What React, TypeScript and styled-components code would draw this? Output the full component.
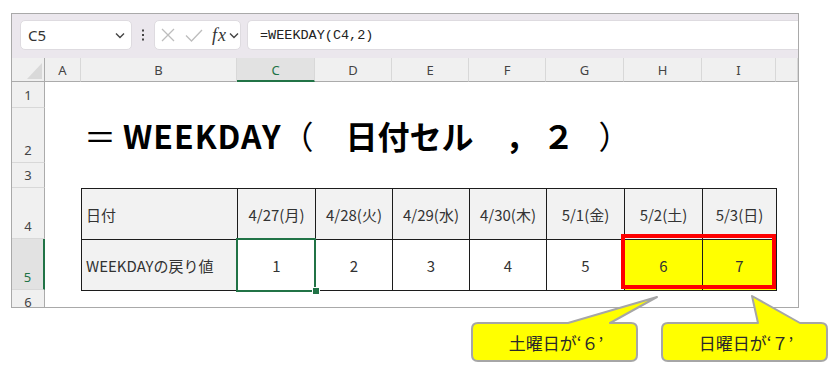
import React from "react";
import styled, { createGlobalStyle } from "styled-components";

// sheet geometry, taken from the Excel window
const COL_WIDTHS = [33, 36, 156, 78, 77, 77, 77, 78, 78, 74, 22];
const ROW_HEIGHTS = [24, 26, 55, 25, 51, 51, 25];
const COL_LETTERS = ["A", "B", "C", "D", "E", "F", "G", "H", "I", ""];
const ACTIVE_COL = "C";
const ACTIVE_ROW = 5;

const DAYS = [
  { label: "4/27(月)", value: 1 },
  { label: "4/28(火)", value: 2 },
  { label: "4/29(水)", value: 3 },
  { label: "4/30(木)", value: 4 },
  { label: "5/1(金)", value: 5 },
  { label: "5/2(土)", value: 6, mark: true },
  { label: "5/3(日)", value: 7, mark: true },
];

const GlobalStyle = createGlobalStyle`
  html, body {
    margin: 0;
    padding: 0;
    background: #fff;
  }
  body {
    font-family: "Noto Sans", "Noto Sans CJK JP", sans-serif;
  }
`;

const Page = styled.div`
  position: relative;
  width: 836px;
  height: 369px;
  padding: 13px 0 0 11px;
  box-sizing: border-box;
  overflow: hidden;
`;

const Frame = styled.div`
  width: 788px;
  box-sizing: border-box;
  border: 1px solid #a9a9a9;
  background: #fff;
`;

/* ---------- formula bar ---------- */

const FormulaBar = styled.div`
  height: 44px;
  box-sizing: border-box;
  display: flex;
  align-items: flex-start;
  padding: 6px 0 0 8px;
  background: #ebe7ed;
`;

const WhiteBox = styled.div`
  height: 30px;
  box-sizing: border-box;
  display: flex;
  align-items: center;
  background: #fff;
  border: 1px solid #dedbe0;
  border-radius: 5px;
`;

const NameBox = styled(WhiteBox)`
  width: 112px;
  justify-content: space-between;
  padding: 0 6px 0 7px;
  font-size: 15px;
  color: #333;
`;

const Dots = styled.div`
  width: 22px;
  height: 30px;
  display: flex;
  align-items: center;
  justify-content: center;
`;

const FxBox = styled(WhiteBox)`
  width: 87px;
  padding: 0 0 0 6px;
  gap: 10px;
`;

const FxText = styled.span`
  font-family: "Liberation Serif", "DejaVu Serif", serif;
  font-style: italic;
  font-size: 18px;
  color: #333;
  letter-spacing: 1px;
  margin-left: -1px;
  margin-right: -8px;
`;

const FormulaInput = styled(WhiteBox)`
  flex: 1;
  margin-left: 6px;
  border-right: none;
  border-radius: 5px 0 0 5px;
  padding-left: 12px;
  font-family: "Liberation Mono", "DejaVu Sans Mono", monospace;
  font-size: 13.5px;
  color: #222;
`;

/* ---------- sheet grid ---------- */

const Sheet = styled.div`
  display: grid;
  grid-template-columns: ${COL_WIDTHS.map((w) => `${w}px`).join(" ")};
  grid-template-rows: ${ROW_HEIGHTS.map((h) => `${h}px`).join(" ")};
  height: 249px;
  overflow: hidden;
  font-size: 13px;
`;

const Corner = styled.div`
  grid-row: 1;
  grid-column: 1;
  position: relative;
  background: #f0f0f0;
  border-right: 1px solid #ababab;
  border-bottom: 1px solid #ababab;
  box-sizing: border-box;

  &::after {
    content: "";
    position: absolute;
    right: 2px;
    bottom: 2px;
    border-style: solid;
    border-width: 0 0 16px 15px;
    border-color: transparent transparent #d9d9d9 transparent;
  }
`;

const ColHead = styled.div<{ $active?: boolean }>`
  grid-row: 1;
  display: flex;
  align-items: center;
  justify-content: center;
  box-sizing: border-box;
  padding-top: 1px;
  background: ${(p) => (p.$active ? "#e2e2e2" : "#f0f0f0")};
  border-right: 1px solid #d8d8d8;
  border-bottom: ${(p) => (p.$active ? "2px solid #217346" : "1px solid #ababab")};
  color: ${(p) => (p.$active ? "#217346" : "#444")};
`;

const RowHead = styled.div<{ $row: number; $active?: boolean }>`
  grid-column: 1;
  grid-row: ${(p) => p.$row};
  display: flex;
  align-items: flex-end;
  justify-content: center;
  box-sizing: border-box;
  padding-bottom: 3px;
  background: ${(p) => (p.$active ? "#e2e2e2" : "#f0f0f0")};
  border-right: ${(p) => (p.$active ? "2px solid #217346" : "1px solid #ababab")};
  border-bottom: 1px solid #d8d8d8;
  color: ${(p) => (p.$active ? "#217346" : "#444")};
`;

const Title = styled.div`
  grid-column: 3 / 12;
  grid-row: 3;
  display: flex;
  align-items: flex-end;
  padding: 0 0 9px 3px;
  white-space: pre;
  font-family: "Noto Sans CJK JP", sans-serif;
  font-weight: 700;
  font-size: 32px;
  line-height: 1.2;
  color: #000;
`;

// the full-width brackets and equals sign are drawn thin in the original
const TitlePart = styled.span<{ $thin?: boolean; $w?: number; $spread?: number }>`
  font-weight: ${(p) => (p.$thin ? 400 : 700)};
  letter-spacing: ${(p) => p.$spread ?? 0}px;
  ${(p) => (p.$w ? `display: inline-block; width: ${p.$w}px;` : "")}
`;

const TitleGap = styled.span<{ $w: number }>`
  display: inline-block;
  width: ${(p) => p.$w}px;
`;

const TableArea = styled.div`
  grid-column: 3 / 11;
  grid-row: 5 / 7;
  position: relative;
`;

const DataTable = styled.table`
  border-collapse: collapse;
  table-layout: fixed;
  width: 695px;
  font-family: "Noto Sans CJK JP", sans-serif;
  font-size: 15px;
  color: #333;

  tr {
    height: 51px;
  }
`;

const Cell = styled.td<{ $tone?: "head" | "plain" | "mark"; $left?: boolean }>`
  padding: 0 4px;
  border: 1px solid #1c1c1c;
  text-align: ${(p) => (p.$left ? "left" : "center")};
  background: ${(p) =>
    p.$tone === "head" ? "#f2f2f2" : p.$tone === "mark" ? "#ffff00" : "#fff"};
  white-space: nowrap;
`;

const SelectedCell = styled(Cell)`
  position: relative;

  &::after {
    content: "";
    position: absolute;
    inset: -2px -1px -2px -2px;
    border: 2px solid #217346;
  }

  &::before {
    content: "";
    position: absolute;
    right: -5px;
    bottom: -5px;
    width: 6px;
    height: 6px;
    background: #217346;
    border: 1px solid #fff;
    z-index: 1;
  }
`;

const RedFrame = styled.div`
  position: absolute;
  left: 540px;
  top: 46px;
  width: 155px;
  height: 55px;
  box-sizing: border-box;
  border: 4px solid #ff0000;
  pointer-events: none;
`;

/* ---------- callouts ---------- */

const Callout = styled.div<{ $x: number; $y: number }>`
  position: absolute;
  left: ${(p) => p.$x}px;
  top: ${(p) => p.$y}px;
  width: 196px;
  height: 76px;
`;

const CalloutLabel = styled.div<{ $top: number }>`
  position: absolute;
  left: 6px;
  top: ${(p) => p.$top}px;
  width: 165px;
  height: 38px;
  display: flex;
  align-items: center;
  justify-content: center;
  padding-left: 3px;
  box-sizing: border-box;
  font-family: "Noto Sans CJK JP", sans-serif;
  font-size: 17px;
  color: #2a2a2a;
`;

const calloutPath = (top: number, tipX: number, tipY: number) => {
  const b = top + 38;
  return `M 12,${top} L 102,${top} L ${tipX},${tipY} L 144,${top} L 165,${top} Q 171,${top} 171,${top + 6} L 171,${b - 6} Q 171,${b} 165,${b} L 12,${b} Q 6,${b} 6,${b - 6} L 6,${top + 6} Q 6,${top} 12,${top} Z`;
};

const Bubble: React.FC<{ x: number; y: number; top: number; tipX: number; tipY: number; text: string }> = ({
  x,
  y,
  top,
  tipX,
  tipY,
  text,
}) => (
  <Callout $x={x} $y={y}>
    <svg width="196" height="76" viewBox="0 0 196 76">
      <path d={calloutPath(top, tipX, tipY)} fill="#ffff00" stroke="#a6a6a6" strokeWidth="2" strokeLinejoin="round" />
    </svg>
    <CalloutLabel $top={top}>{text}</CalloutLabel>
  </Callout>
);

const Chevron = () => (
  <svg width="10" height="7" viewBox="0 0 10 7">
    <polyline points="1,1.5 5,5.5 9,1.5" fill="none" stroke="#444" strokeWidth="1.4" />
  </svg>
);

const App: React.FC = () => {
  return (
    <>
      <GlobalStyle />
      <Page>
        <Frame>
          <FormulaBar>
            <NameBox>
              <span>C5</span>
              <Chevron />
            </NameBox>
            <Dots>
              <svg width="4" height="12" viewBox="0 0 4 12">
                <rect x="1" y="0.5" width="2" height="2" fill="#444" />
                <rect x="1" y="5" width="2" height="2" fill="#444" />
                <rect x="1" y="9.5" width="2" height="2" fill="#444" />
              </svg>
            </Dots>
            <FxBox>
              <svg width="14" height="14" viewBox="0 0 14 14">
                <path d="M1 1 L13 13 M13 1 L1 13" stroke="#bdbdbd" strokeWidth="1.3" />
              </svg>
              <svg width="18" height="13" viewBox="0 0 18 13">
                <polyline points="1,6.5 6.5,12 17,1" fill="none" stroke="#bdbdbd" strokeWidth="1.3" />
              </svg>
              <FxText>fx</FxText>
              <Chevron />
            </FxBox>
            <FormulaInput>=WEEKDAY(C4,2)</FormulaInput>
          </FormulaBar>

          <Sheet>
            <Corner />
            {COL_LETTERS.map((c, i) => (
              <ColHead key={i} $active={c === ACTIVE_COL}>
                {c}
              </ColHead>
            ))}
            {[1, 2, 3, 4, 5, 6].map((r) => (
              <RowHead key={r} $row={r + 1} $active={r === ACTIVE_ROW}>
                {r}
              </RowHead>
            ))}

            <Title>
              <TitlePart $thin $w={39}>＝</TitlePart>
              <TitlePart $spread={1}>WEEKDAY</TitlePart>
              <TitlePart $thin>（</TitlePart>
              <TitlePart>{"　日付セル　，"}</TitlePart>
              <TitleGap $w={5} />
              <TitlePart>２</TitlePart>
              <TitleGap $w={24} />
              <TitlePart $thin>）</TitlePart>
            </Title>

            <TableArea>
              <DataTable>
                <colgroup>
                  {COL_WIDTHS.slice(2, 10).map((w, i) => (
                    <col key={i} style={{ width: w }} />
                  ))}
                </colgroup>
                <tbody>
                  <tr>
                    <Cell $tone="head" $left>
                      日付
                    </Cell>
                    {DAYS.map((d) => (
                      <Cell key={d.label} $tone="head">
                        {d.label}
                      </Cell>
                    ))}
                  </tr>
                  <tr>
                    <Cell $tone="head" $left>
                      WEEKDAYの戻り値
                    </Cell>
                    {DAYS.map((d, i) =>
                      i === 0 ? (
                        <SelectedCell key={d.label}>{d.value}</SelectedCell>
                      ) : (
                        <Cell key={d.label} $tone={d.mark ? "mark" : "plain"}>
                          {d.value}
                        </Cell>
                      )
                    )}
                  </tr>
                </tbody>
              </DataTable>
              <RedFrame />
            </TableArea>
          </Sheet>
        </Frame>

        <Bubble x={466} y={292} top={31} tipX={191} tipY={5} text="土曜日が‘６’" />
        <Bubble x={656} y={290} top={33} tipX={96} tipY={6} text="日曜日が‘７’" />
      </Page>
    </>
  );
};

export default App;
